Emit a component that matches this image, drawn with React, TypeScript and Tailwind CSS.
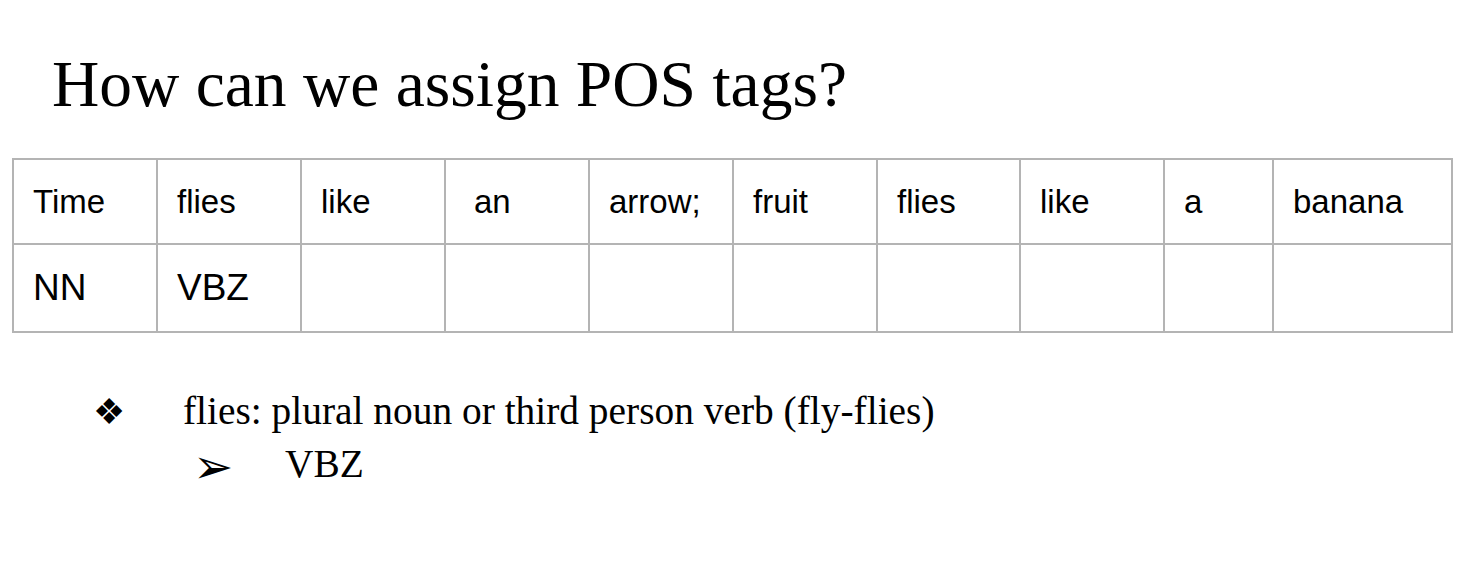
import * as React from 'react';

const words = ['Time', 'flies', 'like', 'an', 'arrow;', 'fruit', 'flies', 'like', 'a', 'banana'];
const tags = ['NN', 'VBZ', '', '', '', '', '', '', '', ''];
const widths = ['w-[144px]', 'w-[144px]', 'w-[144px]', 'w-[144px]', 'w-[144px]', 'w-[144px]', 'w-[143px]', 'w-[144px]', 'w-[109px]', 'w-[179px]'];

export default function App() {
  return (
    <div className="w-[1464px] h-[582px] bg-white text-black overflow-hidden">
      <h1 className="pl-[52px] pt-[44px] h-[158px] text-[65.5px] leading-[80px] font-['Liberation_Serif',serif]">
        How can we assign POS tags?
      </h1>

      <table className="ml-[12px] border-collapse font-['Liberation_Sans',Arial,sans-serif] text-[33px]">
        <tbody>
          <tr className="h-[85px]">
            {words.map((w, i) => (
              <td key={i} className={`${widths[i]} border-2 border-[#b4b4b4] pl-[19px] align-middle`}>
                {i === 3 ? <span className="pl-[9px]">{w}</span> : w}
              </td>
            ))}
          </tr>
          <tr className="h-[88px] text-[37px]">
            {tags.map((t, i) => (
              <td key={i} className={`${widths[i]} border-2 border-[#b4b4b4] pl-[19px] align-middle`}>
                {t}
              </td>
            ))}
          </tr>
        </tbody>
      </table>

      <div className="mt-[51px] font-['Liberation_Serif',serif] text-[39.4px] leading-[55px]">
        <div className="flex h-[55px] items-center">
          <span className="w-[183px] pl-[93px] text-[36px] leading-none">❖</span>
          <span>flies: plural noun or third person verb (fly-flies)</span>
        </div>
        <div className="flex h-[55px] items-center">
          <span className="w-[285px] pl-[193px] text-[48px] leading-none">➢</span>
          <span className="-mt-[4px]">VBZ</span>
        </div>
      </div>
    </div>
  );
}
